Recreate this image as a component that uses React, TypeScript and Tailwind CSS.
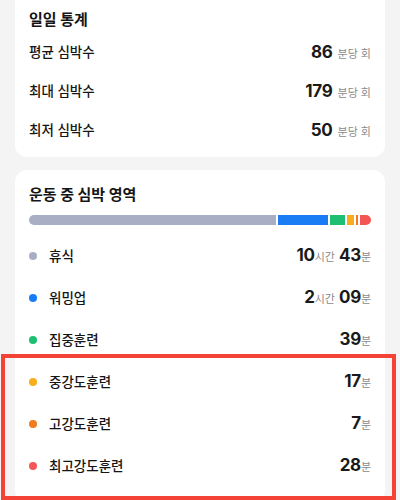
import React from "react";

interface Stat {
  label: string;
  value: number;
}

interface Zone {
  label: string;
  minutes: number;
  color: string;
}

const stats: Stat[] = [
  { label: "평균 심박수", value: 86 },
  { label: "최대 심박수", value: 179 },
  { label: "최저 심박수", value: 50 },
];

const zones: Zone[] = [
  { label: "휴식", minutes: 643, color: "bg-[#a9aec4]" },
  { label: "워밍업", minutes: 129, color: "bg-[#1a7cf5]" },
  { label: "집중훈련", minutes: 39, color: "bg-[#1fbf73]" },
  { label: "중강도훈련", minutes: 17, color: "bg-[#f7ae1a]" },
  { label: "고강도훈련", minutes: 7, color: "bg-[#f27b1d]" },
  { label: "최고강도훈련", minutes: 28, color: "bg-[#f45656]" },
];

function Duration({ minutes }: { minutes: number }) {
  const h = Math.floor(minutes / 60);
  const m = minutes % 60;
  const num = "text-[17px] font-bold text-[#1a1a1a] tracking-[-0.3px]";
  const unit = "text-[11px] text-[#8a8a8a]";
  return (
    <div className="flex items-baseline">
      {h > 0 && (
        <>
          <span className={num}>{h}</span>
          <span className={`${unit} mr-[4px]`}>시간</span>
          <span className={num}>{String(m).padStart(2, "0")}</span>
        </>
      )}
      {h === 0 && <span className={num}>{m}</span>}
      <span className={unit}>분</span>
    </div>
  );
}

export default function App() {
  return (
    <div
      className="relative w-[400px] h-[500px] overflow-hidden bg-[#f4f4f4] px-[15px]"
      style={{ fontFamily: '"Inter", "Noto Sans CJK KR", sans-serif' }}
    >
      <div className="bg-white rounded-b-xl px-[14px] pt-[9px] pb-[7px]">
        <h2 className="text-[15px] font-bold leading-[22px] text-[#151515] mb-[2px]">
          일일 통계
        </h2>
        {stats.map((s) => (
          <div key={s.label} className="h-[39px] flex items-center justify-between">
            <span className="text-[13.5px] font-medium text-[#151515]">{s.label}</span>
            <div className="flex items-baseline">
              <span className="text-[17px] font-bold text-[#1a1a1a] tracking-[-0.3px]">{s.value}</span>
              <span className="text-[11px] text-[#8a8a8a] ml-[5px]">분당 회</span>
            </div>
          </div>
        ))}
      </div>

      <div className="bg-white rounded-xl mt-[13px] px-[14px] pt-[14px] pb-4">
        <h2 className="text-[15px] font-bold leading-[22px] text-[#151515]">
          운동 중 심박 영역
        </h2>
        <div className="mt-[9px] flex gap-[2px] h-[10px] rounded-full overflow-hidden">
          {zones.map((z) => (
            <div
              key={z.label}
              className={`${z.color} basis-0`}
              style={{ flexGrow: z.minutes }}
            />
          ))}
        </div>
        <div className="mt-[10px]">
          {zones.map((z) => (
            <div key={z.label} className="h-[42px] flex items-center justify-between">
              <div className="flex items-center gap-3">
                <span className={`w-2 h-2 rounded-full ${z.color}`} />
                <span className="text-[13.5px] font-medium text-[#151515]">{z.label}</span>
              </div>
              <Duration minutes={z.minutes} />
            </div>
          ))}
        </div>
      </div>

      <div className="absolute left-[1px] top-[354px] w-[395px] h-[146px] border-4 border-[#f44336] pointer-events-none" />
    </div>
  );
}
